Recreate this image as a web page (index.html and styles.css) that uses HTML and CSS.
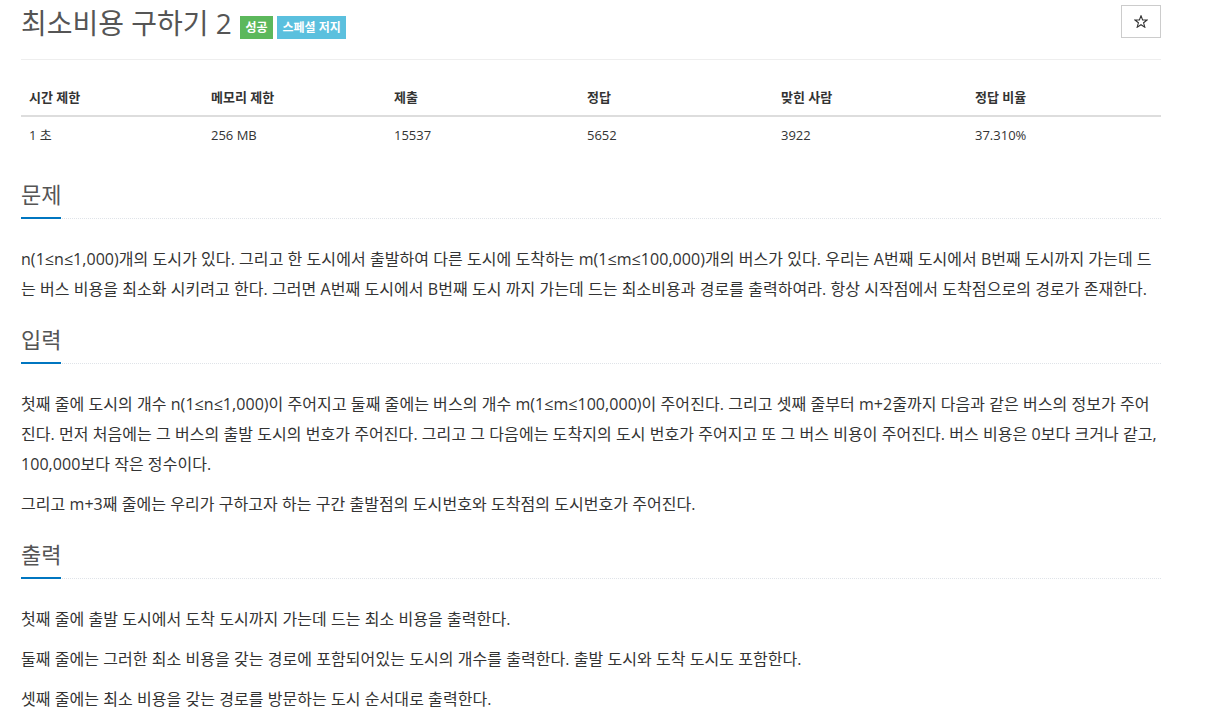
FILE: index.html
```html
<!DOCTYPE html>
<html lang="ko">
<head>
<meta charset="utf-8">
<title>최소비용 구하기 2</title>
<link rel="stylesheet" href="styles.css">
</head>
<body>
<div class="container">
  <div class="page-header">
    <h1 class="title">최소비용 구하기 2<span class="label label-success">성공</span><span class="label label-info">스페셜 저지</span></h1>
    <button class="star-btn" type="button" aria-label="즐겨찾기">
      <svg class="star-icon" width="14" height="13" viewBox="0 0 14 13" aria-hidden="true">
        <polygon points="7,0.8 8.6,4.9 13,5 9.6,7.8 10.8,12.2 7,9.7 3.2,12.2 4.4,7.8 1,5 5.4,4.9" fill="none" stroke="#333" stroke-width="1.1" stroke-linejoin="miter"/>
      </svg>
    </button>
  </div>

  <table class="info-table">
    <colgroup>
      <col class="c1"><col class="c2"><col class="c3"><col class="c4"><col class="c5"><col class="c6">
    </colgroup>
    <thead>
      <tr><th>시간 제한</th><th>메모리 제한</th><th>제출</th><th>정답</th><th>맞힌 사람</th><th>정답 비율</th></tr>
    </thead>
    <tbody>
      <tr><td>1 초</td><td>256 MB</td><td>15537</td><td>5652</td><td>3922</td><td>37.310%</td></tr>
    </tbody>
  </table>

  <section class="problem-section">
    <div class="headline"><h2>문제</h2></div>
    <div class="problem-text">
      <p>n(1≤n≤1,000)개의 도시가 있다. 그리고 한 도시에서 출발하여 다른 도시에 도착하는 m(1≤m≤100,000)개의 버스가 있다. 우리는 A번째 도시에서 B번째 도시까지 가는데 드는 버스 비용을 최소화 시키려고 한다. 그러면 A번째 도시에서 B번째 도시 까지 가는데 드는 최소비용과 경로를 출력하여라. 항상 시작점에서 도착점으로의 경로가 존재한다.</p>
    </div>
  </section>

  <section class="problem-section">
    <div class="headline"><h2>입력</h2></div>
    <div class="problem-text">
      <p>첫째 줄에 도시의 개수 n(1≤n≤1,000)이 주어지고 둘째 줄에는 버스의 개수 m(1≤m≤100,000)이 주어진다. 그리고 셋째 줄부터 m+2줄까지 다음과 같은 버스의 정보가 주어진다. 먼저 처음에는 그 버스의 출발 도시의 번호가 주어진다. 그리고 그 다음에는 도착지의 도시 번호가 주어지고 또 그 버스 비용이 주어진다. 버스 비용은 0보다 크거나 같고, 100,000보다 작은 정수이다.</p>
      <p>그리고 m+3째 줄에는 우리가 구하고자 하는 구간 출발점의 도시번호와 도착점의 도시번호가 주어진다.</p>
    </div>
  </section>

  <section class="problem-section">
    <div class="headline"><h2>출력</h2></div>
    <div class="problem-text">
      <p>첫째 줄에 출발 도시에서 도착 도시까지 가는데 드는 최소 비용을 출력한다.</p>
      <p>둘째 줄에는 그러한 최소 비용을 갖는 경로에 포함되어있는 도시의 개수를 출력한다. 출발 도시와 도착 도시도 포함한다.</p>
      <p>셋째 줄에는 최소 비용을 갖는 경로를 방문하는 도시 순서대로 출력한다.</p>
    </div>
  </section>
</div>
</body>
</html>
```

FILE: styles.css
```css
* { box-sizing: border-box; }

html, body {
  margin: 0;
  padding: 0;
  background: #fff;
}

body {
  font-family: "Open Sans", "Noto Sans CJK KR", sans-serif;
  font-size: 14px;
  color: #333;
}

.container {
  width: 1140px;
  margin-left: 21px;
}

.page-header {
  display: flex;
  justify-content: space-between;
  align-items: flex-start;
  height: 60px;
  border-bottom: 1px solid #eee;
}

.title {
  margin: 5px 0 0 0;
  font-size: 28px;
  font-weight: 400;
  line-height: 36px;
  color: #555;
  display: flex;
  align-items: center;
  white-space: nowrap;
}

.label {
  display: inline-block;
  font-size: 12px;
  font-weight: 700;
  line-height: 23px;
  height: 23px;
  padding: 0 5.5px;
  color: #fff;
  margin-top: 9px;
}

.label-success {
  background: #5cb85c;
  margin-left: 8px;
}

.label-info {
  background: #5bc0de;
  margin-left: 4px;
}

.star-btn {
  margin-top: 5px;
  width: 40px;
  height: 33px;
  border: 1px solid #ccc;
  background: #fff;
  padding: 0;
  display: flex;
  align-items: center;
  justify-content: center;
}

.star-icon {
  display: block;
  margin-left: -1px;
}

.info-table {
  width: 1140px;
  margin-top: 19px;
  margin-bottom: 29px;
  border-collapse: collapse;
  font-size: 13px;
  table-layout: fixed;
}

.info-table .c1 { width: 182px; }
.info-table .c2 { width: 183px; }
.info-table .c3 { width: 193px; }
.info-table .c4 { width: 194px; }
.info-table .c5 { width: 194px; }
.info-table .c6 { width: 194px; }

.info-table th,
.info-table td {
  padding: 8px;
  line-height: 20px;
  text-align: left;
  color: #333;
}

.info-table th {
  font-weight: 700;
  border-bottom: 2px solid #ddd;
}

.problem-section {
  margin-top: 23px;
}

.headline {
  border-bottom: 1px dotted #dfe3e8;
  margin-bottom: 25px;
}

.headline h2 {
  display: inline-block;
  margin: 0 0 -1px 0;
  font-size: 22px;
  font-weight: 400;
  line-height: 24px;
  padding-bottom: 11px;
  border-bottom: 2px solid #0076c0;
  color: #555;
}

.problem-text p {
  margin: 0 0 10px 0;
  font-size: 16px;
  line-height: 30px;
  letter-spacing: 0.05px;
  color: #333;
}
```
